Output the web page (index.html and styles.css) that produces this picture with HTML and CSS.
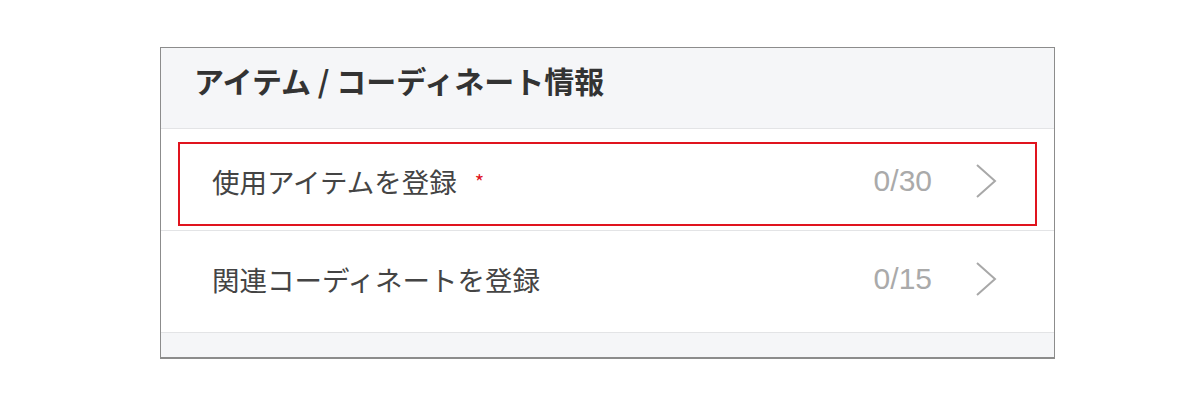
FILE: index.html
```html
<!DOCTYPE html>
<html lang="ja">
<head>
    <meta charset="UTF-8">
    <title>アイテム / コーディネート情報</title>
    <link rel="stylesheet" href="styles.css">
</head>
<body>
    <div class="panel">
        <div class="panel-header">
            <h2>アイテム / コーディネート情報</h2>
        </div>

        <div class="row row-first">
            <a class="row-link is-required" href="#">
                <span class="row-label">使用アイテムを登録<span class="required-mark">*</span></span>
                <span class="row-count">0/30</span>
                <svg class="chevron" width="24" height="36" viewBox="0 0 24 36">
                    <path d="M3 2 L21 18 L3 34" fill="none" stroke="#a8a8a8" stroke-width="2"/>
                </svg>
            </a>
        </div>

        <div class="row">
            <a class="row-link" href="#">
                <span class="row-label">関連コーディネートを登録</span>
                <span class="row-count">0/15</span>
                <svg class="chevron" width="24" height="36" viewBox="0 0 24 36">
                    <path d="M3 2 L21 18 L3 34" fill="none" stroke="#a8a8a8" stroke-width="2"/>
                </svg>
            </a>
        </div>

        <div class="panel-footer"></div>
    </div>
</body>
</html>
```

FILE: styles.css
```css
body {
    margin: 0;
    background-color: #ffffff;
    font-family: "Noto Sans CJK JP", "Noto Sans", sans-serif;
    color: #333;
}

.panel {
    width: 893px;
    margin: 47px 0 0 160px;
    border: 1px solid #8c8c8c;
    border-bottom-width: 2px;
    background-color: #f5f6f8;
}

.panel-header {
    height: 80px;
    padding: 0 33px;
    border-bottom: 1px solid #e3e4e6;
}

.panel-header h2 {
    margin: 0;
    padding-top: 12px;
    font-size: 30px;
    line-height: 40px;
    font-weight: bold;
    color: #333;
}

.row {
    height: 101px;
    background-color: #ffffff;
    border-bottom: 1px solid #e3e4e6;
    display: flex;
    align-items: center;
}

.row-first {
    align-items: flex-start;
    padding-top: 13px;
    height: 88px;
}

.row-link {
    flex: 1;
    display: flex;
    align-items: center;
    height: 74px;
    margin: 0 17px;
    padding: 0 37px 6px 32px;
    border: 2px solid transparent;
    text-decoration: none;
    color: #444;
}

.row-link.is-required {
    border-color: #e0141e;
}

.row-label {
    flex: 1;
    font-size: 27.5px;
    line-height: 36px;
    color: #444;
}

.required-mark {
    color: #e0141e;
    font-size: 20px;
    margin-left: 18px;
    vertical-align: 3px;
}

.row-count {
    font-family: "Liberation Sans", "Noto Sans", sans-serif;
    font-size: 30px;
    color: #aaa;
    margin-right: 42px;
}

.chevron {
    display: block;
}

.panel-footer {
    height: 24px;
}
```
